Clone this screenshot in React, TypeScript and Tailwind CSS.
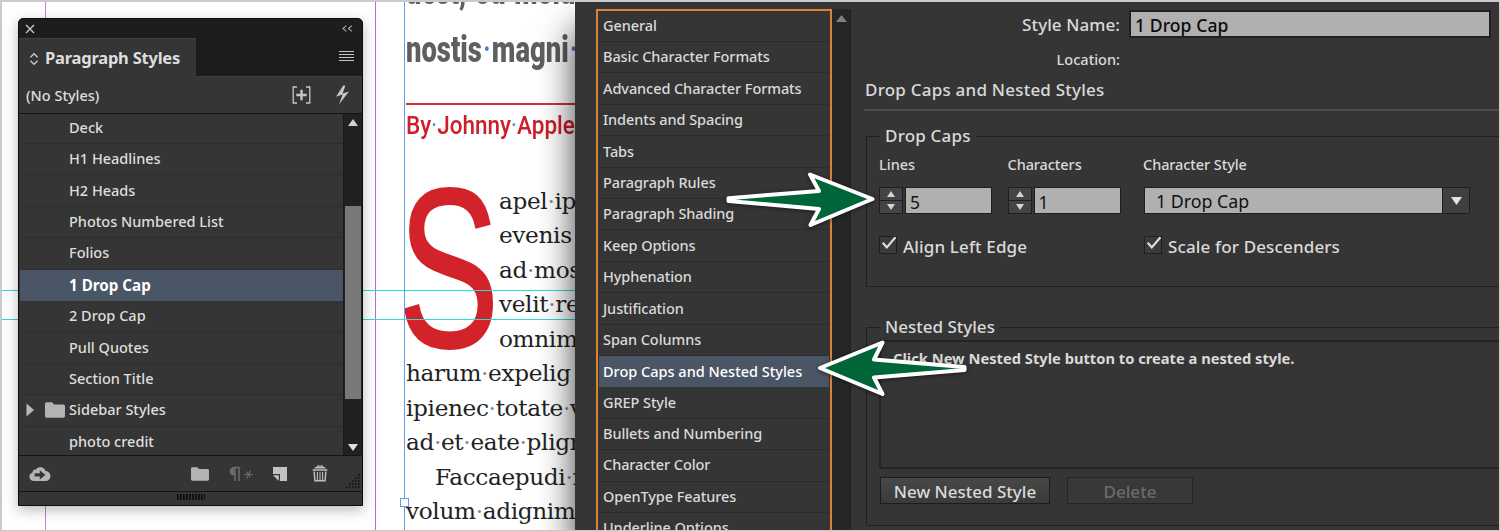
import React from 'react';

type PanelRow = { name: string; kind?: 'selected' | 'group' };

const paragraphStyles: PanelRow[] = [
  { name: 'Deck' },
  { name: 'H1 Headlines' },
  { name: 'H2 Heads' },
  { name: 'Photos Numbered List' },
  { name: 'Folios' },
  { name: '1 Drop Cap', kind: 'selected' },
  { name: '2 Drop Cap' },
  { name: 'Pull Quotes' },
  { name: 'Section Title' },
  { name: 'Sidebar Styles', kind: 'group' },
  { name: 'photo credit' },
];

const categories = [
  'General',
  'Basic Character Formats',
  'Advanced Character Formats',
  'Indents and Spacing',
  'Tabs',
  'Paragraph Rules',
  'Paragraph Shading',
  'Keep Options',
  'Hyphenation',
  'Justification',
  'Span Columns',
  'Drop Caps and Nested Styles',
  'GREP Style',
  'Bullets and Numbering',
  'Character Color',
  'OpenType Features',
  'Underline Options',
];

/* Text with hidden characters shown: each space becomes a coloured dot. */
function Marked({ text, dot }: { text: string; dot: string }) {
  return (
    <>
      {text.split(' ').map((word, i) => (
        <React.Fragment key={i}>
          {i > 0 && <span className={dot}>·</span>}
          {word}
        </React.Fragment>
      ))}
    </>
  );
}

function BodyLine({ text, indent = false }: { text: string; indent?: boolean }) {
  return (
    <div className={indent ? 'h-[34.45px] pl-[29px]' : 'h-[34.45px]'}>
      <Marked text={text} dot="text-[#7487a8]" />
    </div>
  );
}

function Document() {
  return (
    <div className="relative w-[573px] shrink-0 overflow-hidden bg-white whitespace-nowrap">
      <div className="flex h-full flex-col pl-[404px]">
        <div className="h-[28px] font-[Roboto] text-[37px] leading-[37px] font-black text-[#5f5f5f]">
          <div className="-mt-[29px] origin-left scale-x-[.73]">
            <Marked text="uest, ou molu" dot="text-transparent" />
          </div>
        </div>
        <div className="h-[73px] font-[Roboto] text-[37px] leading-[40px] font-black text-[#5f5f5f]">
          <div className="origin-left scale-x-[.74]">
            <Marked text="nostis magni " dot="font-medium px-[1.5px] text-[#4a7fd0]" />
          </div>
        </div>
        <div className="h-[2px] shrink-0 bg-[#cf3338]" />
        <div className="h-[79px] pt-px font-[Roboto] text-[26.5px] leading-[38px] font-medium text-[#cc1f2a]">
          <div className="origin-left scale-x-[.85]">
            <Marked text="By Johnny Apple" dot="font-normal text-[#4a7fd0]" />
          </div>
        </div>
        <div className="font-['DejaVu_Serif',serif] text-[23.2px] leading-[34.45px] tracking-[-0.35px] text-[#222222]">
          <div className="flex">
            <div className="h-[172px] w-[93px] shrink-0 font-['Liberation_Sans'] text-[226px] leading-[170px] tracking-normal text-[#d2232a]">
              <div className="-ml-[8px] origin-left scale-x-[.672] [-webkit-text-stroke:2px_#d2232a]">S</div>
            </div>
            <div>
              <BodyLine text="apel ips" />
              <BodyLine text="evenis" />
              <BodyLine text="ad mos" />
              <BodyLine text="velit re" />
              <BodyLine text="omnim" />
            </div>
          </div>
          <BodyLine text="harum expelig" />
          <BodyLine text="ipienec totate v" />
          <BodyLine text="ad et eate plign" />
          <BodyLine text="Faccaepudi n" indent />
          <BodyLine text="volum adignim" />
        </div>
      </div>

      <div className="absolute inset-y-0 left-[43px] w-px bg-[#c07df0]" />
      <div className="absolute inset-y-0 left-[373px] w-px bg-[#b865ea]" />
      <div className="absolute inset-y-0 left-[402px] w-px bg-[#5f9fe8]" />
      <div className="absolute inset-x-0 top-[288px] h-px bg-[#2fd9d4]" />
      <div className="absolute inset-x-0 top-[317px] h-px bg-[#2fd9d4]" />
      <div className="absolute top-[496px] left-[398px] size-[9px] border border-[#5f9ce6] bg-white" />

      <ParagraphStylesPanel />
    </div>
  );
}

function ParagraphStylesPanel() {
  return (
    <div className="absolute top-[16px] left-[16px] flex h-[488px] w-[345px] flex-col overflow-visible rounded-t-[5px] border border-[#0c0c0c] bg-[#353535] text-[#dedede] shadow-[0_4px_14px_rgba(0,0,0,0.28)]">
      <div className="flex h-[19px] shrink-0 items-center justify-between rounded-t-[4px] bg-[#1d1d1d] pr-[9px] pl-[6px]">
        <svg width="10" height="10" viewBox="0 0 10 10" fill="none" stroke="#c8c8c8" strokeWidth="1.4">
          <path d="M1 1 9 9M9 1 1 9" />
        </svg>
        <svg width="11" height="7" viewBox="0 0 11 7" fill="none" stroke="#a8a8a8" strokeWidth="1.1">
          <path d="M4.3.6 1 3.5l3.3 2.9M9.8.6 6.5 3.5l3.3 2.9" />
        </svg>
      </div>
      <div className="flex h-[39px] shrink-0 justify-between border-b border-[#3e3e3e] bg-[#1c1c1c]">
        <div className="-mb-px flex w-[177px] items-center border-t border-[#424242] bg-[#353535] pl-[10px]">
          <svg className="mr-[6px] mt-px" width="10" height="14" viewBox="0 0 10 14" fill="none" stroke="#c8c8c8" strokeWidth="1.3">
            <path d="M1.4 5.3 5 1.7l3.6 3.6M1.4 8.7 5 12.3l3.6-3.6" />
          </svg>
          <span className="text-[16.5px] font-bold tracking-[-0.22px]">Paragraph Styles</span>
        </div>
        <svg className="mt-[13px] mr-[8px]" width="15" height="11" viewBox="0 0 15 11" fill="none" stroke="#c4c4c4" strokeWidth="1">
          <path d="M0 .5h15M0 3.5h15M0 6.5h15M0 9.5h15" />
        </svg>
      </div>
      <div className="flex h-[36px] shrink-0 items-center pr-[12px] pl-[7px]">
        <span className="mt-px grow text-[14.5px] font-medium">(No Styles)</span>
        <svg className="mr-[24px]" width="19" height="18" viewBox="0 0 19 18" fill="none" stroke="#c6c6c6">
          <path d="M5 1H1.2v16H5M14 1h3.8v16H14" strokeWidth="1.3" />
          <path d="M9.5 3.8v10.4M4.3 9h10.4" strokeWidth="2.4" />
        </svg>
        <svg width="15" height="20" viewBox="0 0 15 20" fill="#c6c6c6">
          <path d="M8.2.4 1 11.8 7.6 9.6 4 19.4 14 6.4 7.6 8.4 10.4.4z" />
        </svg>
      </div>
      <div className="flex h-[343px] shrink-0 border-y border-[#151515]">
        <div className="flex grow flex-col overflow-hidden pl-px">
          {paragraphStyles.map((row) => (
            <div
              key={row.name}
              className={
                row.kind === 'selected'
                  ? 'flex h-[31.4px] shrink-0 items-center bg-[#4a5565] pl-[49px] text-[15.2px] font-bold text-white'
                  : row.kind === 'group'
                    ? 'flex h-[31.4px] shrink-0 items-center border-b border-[#2d2d2d] pl-[6px] text-[14.5px] font-medium'
                    : 'flex h-[31.4px] shrink-0 items-center border-b border-[#2d2d2d] pl-[49px] text-[14.5px] font-medium first:-mt-[1.4px]'
              }
            >
              {row.kind === 'group' && (
                <>
                  <svg className="mr-[10px]" width="9" height="14" viewBox="0 0 9 14" fill="#b9b9b9">
                    <path d="M.5.5 8 7 .5 13.5z" />
                  </svg>
                  <FolderIcon className="mr-[4px] h-[16px] w-[20px]" />
                </>
              )}
              {row.name}
            </div>
          ))}
        </div>
        <div className="flex w-[19px] flex-col items-center border-l border-[#1a1a1a] bg-[#212121]">
          <svg className="mt-[5px]" width="10" height="7" viewBox="0 0 10 7" fill="#d0d0d0">
            <path d="M5 0l5 7H0z" />
          </svg>
          <div className="mt-[80px] h-[193px] w-[16px] bg-[#787878]" />
          <svg className="mt-[45px]" width="10" height="7" viewBox="0 0 10 7" fill="#e0e0e0">
            <path d="M0 0h10L5 7z" />
          </svg>
        </div>
      </div>
      <div className="flex h-[36px] shrink-0 items-center border-b border-[#151515] pr-[2px] pl-[9px]">
        <svg width="23" height="17" viewBox="0 0 23 17">
          <path d="M5.4 16A4.4 4.4 0 0 1 4.6 7.4 3 3 0 0 1 7.9 4.6 5.2 5.2 0 0 1 17.4 6 5 5 0 0 1 17.6 16z" fill="#b5b5b5" />
          <path d="M6.6 8.2h5.2V5.2l5.6 4.7-5.6 4.7v-3H6.6z" fill="#353535" />
        </svg>
        <div className="grow" />
        <FolderIcon className="mt-px mr-[19px] h-[14px] w-[18px]" />
        <svg className="mr-[19px]" width="25" height="16" viewBox="0 0 25 16" fill="none" stroke="#6c6c6c">
          <path d="M6 1a4.3 4.3 0 0 0 0 8.6z" fill="#6c6c6c" stroke="none" />
          <path d="M5.4 1.5h6.2M7 1v14M11 1v14" strokeWidth="1.5" />
          <path d="M16 8.5h9M22.5 4.5l-4 8M18.6 5.5l3.6 6" strokeWidth="1.1" />
        </svg>
        <svg className="mr-[24px]" width="16" height="16" viewBox="0 0 16 16" fill="#c2c2c2">
          <path d="M1 1h14v14H8V8H1z" />
          <path d="M1 9.3h5.8V15z" />
        </svg>
        <svg className="mr-[18px]" width="16" height="17" viewBox="0 0 16 17" fill="none" stroke="#bdbdbd">
          <path d="M5.5 2.6V1.2h5v1.4" strokeWidth="1.2" />
          <path d="M2.6 2.8h10.8M.6 5h14.8" strokeWidth="1.6" />
          <path d="M2.2 6.5 2.9 15.8h10.2l.7-9.3" strokeWidth="1.5" />
          <path d="M5.4 7v8M8 7v8M10.6 7v8" strokeWidth="1.1" />
        </svg>
        <svg className="mt-[14px]" width="14" height="14" viewBox="0 0 14 14" stroke="#101010" strokeWidth="1.6" strokeDasharray="1.6 1.4">
          <path d="M12 1h2M9 4h5M6 7h8M3 10h11M0 13h14" />
        </svg>
      </div>
      <div className="flex grow items-start justify-center">
        <svg className="mt-[2px]" width="28" height="6" viewBox="0 0 28 6" stroke="#0e0e0e" strokeWidth="1.6" strokeDasharray="1.7 1.3">
          <path d="M0 3h28" strokeWidth="6" />
        </svg>
      </div>
    </div>
  );
}

function FolderIcon({ className }: { className: string }) {
  return (
    <svg className={className} viewBox="0 0 20 16" preserveAspectRatio="none" fill="#b3b3b3">
      <path d="M0 2Q0 .3 1.6.3H6.6Q8 .3 8.4 1.8L8.7 2.4H18.4Q20 2.4 20 4V14Q20 15.7 18.4 15.7H1.6Q0 15.7 0 14z" />
    </svg>
  );
}

function Spinner({ value }: { value: string }) {
  return (
    <div className="flex h-[27px] gap-[2px]">
      <div className="flex w-[24px] flex-col border border-[#1e1e1e] bg-[#444444]">
        <div className="flex grow items-center justify-center border-b border-[#1e1e1e]">
          <svg width="8" height="6" viewBox="0 0 8 6" fill="#d4d4d4">
            <path d="M4 0l4 6H0z" />
          </svg>
        </div>
        <div className="flex grow items-center justify-center">
          <svg width="8" height="6" viewBox="0 0 8 6" fill="#d4d4d4">
            <path d="M0 0h8L4 6z" />
          </svg>
        </div>
      </div>
      <div className="w-[87px] border border-[#1e1e1e] bg-[#b0b0b0] pl-[4px] text-[17.5px] leading-[28px] text-[#151515]">{value}</div>
    </div>
  );
}

function Check({ label }: { label: string }) {
  return (
    <div className="flex items-center">
      <div className="-mt-[3px] flex size-[18px] items-center justify-center border border-[#1e1e1e] bg-[#3b3b3b]">
        <svg className="mb-[4px] ml-px overflow-visible" width="14" height="12" viewBox="0 0 14 12" fill="none" stroke="#e0e0e0" strokeWidth="2.1">
          <path d="M.8 5.8 4.8 10.4 13.5.2" />
        </svg>
      </div>
      <span className="pl-[6px] text-[17px] font-medium tracking-[0.14px]">{label}</span>
    </div>
  );
}

function OptionsDialog() {
  return (
    <div className="relative flex min-w-0 grow bg-[#353535] text-[#dadada] shadow-[0_26px_34px_rgba(0,0,0,0.75)]">
      <div className="ml-[21px] mt-[7px] flex w-[236px] shrink-0 flex-col overflow-hidden border-2 border-b-0 border-[#d98335] px-px">
        {categories.map((name) => (
          <div
            key={name}
            className={
              name === 'Drop Caps and Nested Styles'
                ? 'flex h-[31.4px] shrink-0 items-center bg-[#4a5565] pl-[4px] text-[14.5px] font-medium text-white'
                : 'flex h-[31.4px] shrink-0 items-center border-b border-[#2c2c2c] pl-[4px] text-[14.5px] font-medium tracking-[-0.08px] first:-mt-[0.3px]'
            }
          >
            {name}
          </div>
        ))}
      </div>
      <div className="mt-[7px] flex w-[19px] shrink-0 justify-center border-r border-[#1f1f1f] bg-[#262626]">
        <svg className="mt-[6px]" width="11" height="7" viewBox="0 0 11 7" fill="#808080">
          <path d="M5.5 0 11 7H0z" />
        </svg>
      </div>

      <div className="flex min-w-0 grow flex-col pl-[13px]">
        <div className="mt-[8px] flex h-[28px] items-center pr-[8px]">
          <div className="mr-[9px] w-[256px] pt-px text-right text-[17px] font-medium tracking-[0.08px]">Style Name:</div>
          <div className="h-[28px] grow border-2 border-[#202020] bg-[#b0b0b0] pl-[4px] text-[17.5px] leading-[26px] font-medium tracking-[0.1px] text-[#0b0b0b]">
            1 Drop Cap
          </div>
        </div>
        <div className="mt-[10px] h-[22px] w-[256px] text-right text-[14.5px] leading-[22px] font-medium">Location:</div>
        <div className="mt-[8px] h-[24px] pl-px text-[17px] leading-[24px] font-medium tracking-[0.22px]">Drop Caps and Nested Styles</div>
        <div className="mt-[7px] h-[2px] bg-[#4c4c4c]" />

        <fieldset className="mt-[12px] ml-[2px] h-[164px] border border-r-0 border-[#202020]">
          <legend className="ml-[12px] h-[26px] px-[6px] text-[17px] leading-[26px] font-medium tracking-[0.2px]">Drop Caps</legend>
          <div className="flex pl-[12px]">
            <div className="w-[128.5px]">
              <div className="mt-[5px] mb-[13px] h-[20px] text-[14.5px] leading-[20px] font-medium">Lines</div>
              <Spinner value="5" />
            </div>
            <div className="w-[136.5px]">
              <div className="mt-[5px] mb-[13px] h-[20px] text-[14.5px] leading-[20px] font-medium tracking-[-0.08px]">Characters</div>
              <Spinner value="1" />
            </div>
            <div>
              <div className="mt-[5px] mb-[13px] -ml-px h-[20px] text-[14.5px] leading-[20px] font-medium tracking-[-0.08px]">Character Style</div>
              <div className="flex h-[27px] w-[326px] border border-[#1e1e1e] bg-[#b0b0b0] text-[17.8px] leading-[26px] text-[#111111]">
                <span className="grow pl-[11px]">1 Drop Cap</span>
                <span className="flex w-[27px] items-center justify-center border-l border-[#1e1e1e] bg-[#404040]">
                  <svg width="11" height="8" viewBox="0 0 11 8" fill="#e4e4e4">
                    <path d="M0 0h11L5.5 8z" />
                  </svg>
                </span>
              </div>
            </div>
          </div>
          <div className="mt-[20px] flex pl-[12px]">
            <div className="w-[265px]">
              <Check label="Align Left Edge" />
            </div>
            <Check label="Scale for Descenders" />
          </div>
        </fieldset>

        <fieldset className="mt-[27px] ml-[2px] h-[212px] border border-r-0 border-[#202020]">
          <legend className="ml-[12px] h-[26px] px-[6px] text-[17px] leading-[26px] font-medium">Nested Styles</legend>
          <div className="ml-[12px] h-[129px] border-2 border-r-0 border-[#242424] pt-[6px] pl-[12px] text-[14.7px] leading-[20px] font-bold">
            Click New Nested Style button to create a nested style.
          </div>
          <div className="mt-[8px] ml-[13px] flex gap-[17px] text-[17px] leading-[28px] font-medium">
            <div className="h-[27px] w-[170px] border border-[#1c1c1c] bg-linear-to-b from-[#484848] to-[#3a3a3a] text-center">New Nested Style</div>
            <div className="h-[27px] w-[126px] border border-[#242424] bg-[#383838] text-center text-[#6c6c6c]">Delete</div>
          </div>
        </fieldset>
      </div>

      <ArrowRight />
      <ArrowLeft />
    </div>
  );
}

function ArrowRight() {
  return (
    <svg className="absolute top-[163px] left-[147px] drop-shadow-[0_1px_2px_rgba(0,0,0,0.5)]" width="160" height="70" viewBox="0 0 160 70">
      <path
        d="M6.5 33.2 97 26 88 9.5 150.5 34 88.5 60 97 44 6.5 36z"
        fill="#00663a"
        stroke="#ffffff"
        strokeWidth="4"
        strokeLinejoin="round"
      />
    </svg>
  );
}

function ArrowLeft() {
  return (
    <svg className="absolute top-[333px] left-[238px] drop-shadow-[0_1px_2px_rgba(0,0,0,0.5)]" width="160" height="70" viewBox="0 0 160 70">
      <path
        d="M151.5 32 61 24.5 69.5 7.5 7 33 69.5 59 61 42.5 151.5 35z"
        fill="#00663a"
        stroke="#ffffff"
        strokeWidth="4"
        strokeLinejoin="round"
      />
    </svg>
  );
}

export default function App() {
  return (
    <div className="flex h-[531px] w-[1500px] overflow-hidden border-t-2 border-r border-b border-l-2 border-[#c9cacb] bg-white font-['Noto_Sans','Open_Sans',sans-serif]">
      <Document />
      <OptionsDialog />
    </div>
  );
}
